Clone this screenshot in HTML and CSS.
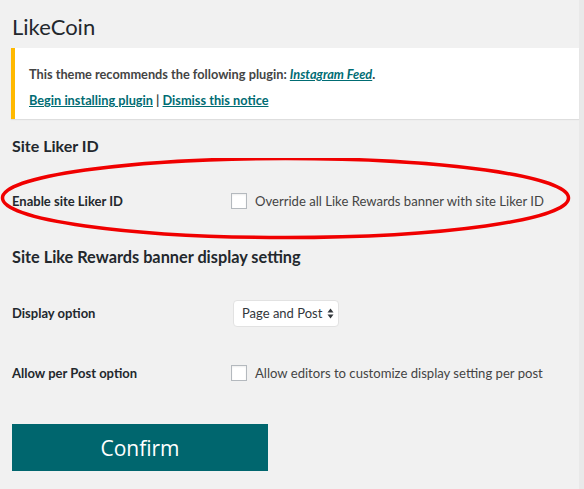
FILE: index.html
```html
<!DOCTYPE html>
<html>
<head>
<meta charset="utf-8">
<link rel="stylesheet" href="styles.css">
</head>
<body>
<div class="page">
  <h1 class="title">LikeCoin</h1>
  <div class="notice">
    <p class="notice-line">This theme recommends the following plugin: <a class="link italic" href="#">Instagram Feed</a>.</p>
    <p class="notice-line"><a class="link" href="#">Begin installing plugin</a> | <a class="link" href="#">Dismiss this notice</a></p>
  </div>

  <h2 class="section">Site Liker ID</h2>
  <div class="row row-first">
    <div class="label">Enable site Liker ID</div>
    <label class="control"><input class="check" type="checkbox"><span class="desc">Override all Like Rewards banner with site Liker ID</span></label>
  </div>

  <h2 class="section section-second">Site Like Rewards banner display setting</h2>
  <div class="row row-display">
    <div class="label">Display option</div>
    <div class="control">
      <div class="select">
        <span class="select-text">Page and Post</span>
        <svg class="select-arrows" width="7" height="11" viewBox="0 0 7 11"><path d="M3.5 0.5 L6.5 4.5 L0.5 4.5 Z" fill="#32373c"/><path d="M3.5 10.5 L6.5 6.5 L0.5 6.5 Z" fill="#32373c"/></svg>
      </div>
    </div>
  </div>
  <div class="row row-allow">
    <div class="label">Allow per Post option</div>
    <label class="control"><input class="check" type="checkbox"><span class="desc">Allow editors to customize display setting per post</span></label>
  </div>

  <button class="confirm" type="button">Confirm</button>

  <svg class="annotation" width="584" height="100" viewBox="0 0 584 100"><ellipse cx="285.5" cy="40" rx="283" ry="39.5" fill="none" stroke="#f00000" stroke-width="3.5"/></svg>
</div>
</body>
</html>
```

FILE: styles.css
```css
html, body {
  margin: 0;
  padding: 0;
}
body {
  background: #e9e9e9;
  font-family: "Lato", "Noto Sans", sans-serif;
  color: #23282d;
  height: 489px;
  overflow: hidden;
}
.page {
  position: relative;
  background: #f1f1f1;
  margin-right: 5px;
  height: 489px;
  padding: 12px 0 0 11px;
  box-sizing: border-box;
}
.title {
  margin: 0 0 6px 1px;
  font-size: 22px;
  font-weight: 400;
  line-height: 30px;
  color: #23282d;
}
.notice {
  background: #fff;
  border-left: 4px solid #ffb900;
  box-shadow: 0 1px 1px rgba(0,0,0,0.08);
  padding: 17px 12px 10px 14px;
  height: 71px;
  box-sizing: border-box;
}
.notice-line {
  margin: 0;
  font-size: 12.75px;
  font-weight: 700;
  line-height: 18px;
  color: #444;
}
.notice-line + .notice-line {
  margin-top: 8px;
}
.link {
  color: #006c73;
  text-decoration: underline;
}
.italic {
  font-style: italic;
}
.section {
  margin: 17px 0 0 1px;
  font-size: 16px;
  font-weight: 700;
  line-height: 20px;
  color: #23282d;
}
.section-second {
  margin-top: 26px;
  font-size: 16.3px;
}
.row {
  display: grid;
  grid-template-columns: 219px 1fr;
  align-items: center;
  height: 40px;
  margin-left: 1px;
}
.row-first {
  margin-top: 25px;
}
.row-display {
  margin-top: 26px;
}
.row-allow {
  margin-top: 20px;
}
.label {
  font-size: 13px;
  font-weight: 700;
  color: #23282d;
}
.control {
  display: flex;
  align-items: center;
  gap: 8px;
}
.check {
  appearance: none;
  -webkit-appearance: none;
  margin: 0;
  width: 16px;
  height: 16px;
  border: 1px solid #b4b9be;
  background: #fff;
  box-shadow: inset 0 1px 2px rgba(0,0,0,0.07);
  box-sizing: border-box;
}
.desc {
  font-size: 13.1px;
  color: #444;
}
.select {
  margin-left: 2px;
  display: flex;
  align-items: center;
  gap: 5px;
  width: 106px;
  height: 27px;
  box-sizing: border-box;
  padding: 0 0 0 8px;
  background: #fff;
  border: 1px solid #e2e2e2;
  border-radius: 4px;
}
.select-text {
  font-size: 13px;
  color: #32373c;
}
.confirm {
  display: block;
  margin: 31px 0 0 1px;
  width: 256px;
  height: 47px;
  border: 0;
  border-radius: 0;
  background: #00666e;
  color: #fff;
  font-family: "Open Sans", "Noto Sans", sans-serif;
  font-size: 21px;
  font-weight: 400;
  padding: 0;
}
.annotation {
  position: absolute;
  left: 0;
  top: 158px;
  pointer-events: none;
}
```
